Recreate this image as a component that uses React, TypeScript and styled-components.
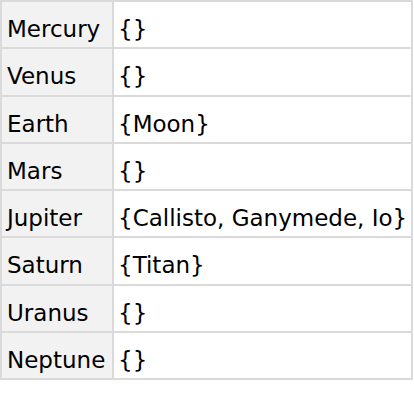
import React from "react";
import styled, { createGlobalStyle } from "styled-components";

const Global = createGlobalStyle`
  html, body { margin: 0; padding: 0; background: #ffffff; }
  body { font-family: "DejaVu Sans", Verdana, sans-serif; }
`;

const Grid = styled.div`
  display: grid;
  grid-template-columns: 110px 297px;
  grid-auto-rows: 45.3px;
  gap: 2px;
  width: max-content;
  border: 2px solid #dadada;
  background: #dadada;
  font-family: "DejaVu Sans", Verdana, sans-serif;
  font-size: 23px;
  color: #000;
`;

const Cell = styled.div<{ $label?: boolean }>`
  background: ${(p) => (p.$label ? "#f2f2f2" : "#ffffff")};
  padding: 10px 0 0 ${(p) => (p.$label ? "5px" : "4px")};
  line-height: 34px;
  white-space: nowrap;
  overflow: hidden;
  box-sizing: border-box;
`;

const data: [string, string][] = [
  ["Mercury", "{}"],
  ["Venus", "{}"],
  ["Earth", "{Moon}"],
  ["Mars", "{}"],
  ["Jupiter", "{Callisto, Ganymede, Io}"],
  ["Saturn", "{Titan}"],
  ["Uranus", "{}"],
  ["Neptune", "{}"],
];

export default function App() {
  return (
    <>
      <Global />
      <Grid>
        {data.map(([k, v]) => (
          <React.Fragment key={k}>
            <Cell $label>{k}</Cell>
            <Cell>{v}</Cell>
          </React.Fragment>
        ))}
      </Grid>
    </>
  );
}
